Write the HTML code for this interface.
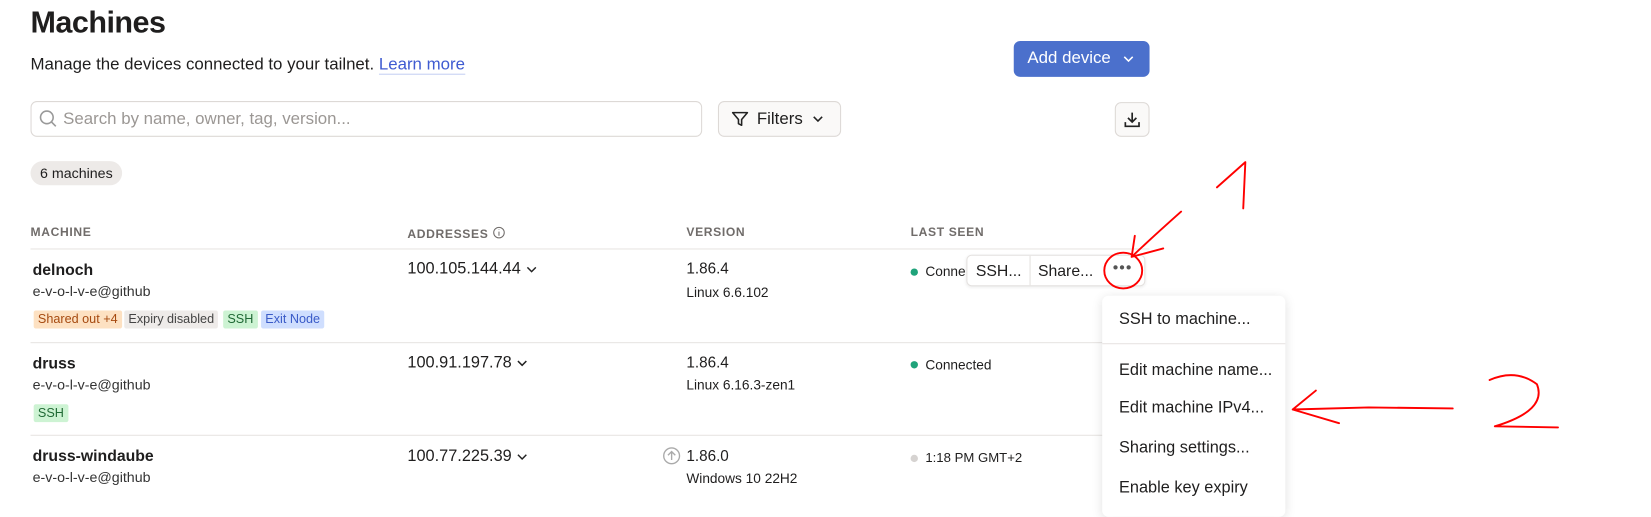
<!DOCTYPE html>
<html><head><meta charset="utf-8">
<style>
*{box-sizing:border-box;margin:0;padding:0}
body{width:1651px;height:487px;overflow:hidden;background:#fff;font-family:"Liberation Sans",sans-serif;color:#1f1e1e;position:relative}
#w{position:absolute;left:0;top:0;width:1568px;height:463px;transform:scale(1.0527);transform-origin:0 0}
.a{position:absolute;white-space:nowrap}
h1{position:absolute;left:29px;top:6px;font-size:29px;font-weight:700;letter-spacing:-0.5px}
.sub{left:29px;top:53px;font-size:16px}
.sub a{color:#3f5bd1;text-decoration:none;border-bottom:1px solid #c6cff2}
.btn{position:absolute;border:1px solid #ddd9d6;border-radius:6px;background:#faf9f8;font-size:16px}
.hd{font-size:11.5px;font-weight:700;color:#706c6a;letter-spacing:.6px;top:215px}
.line{position:absolute;left:29px;width:1063px;height:1px;background:#e7e4e2}
.nm{font-size:15px;font-weight:700}
.ow{font-size:13.5px;color:#333}
.ip{font-size:15.5px}
.ver{font-size:14.5px}
.os{font-size:13px}
.tag{position:absolute;font-size:12px;height:17px;line-height:17px;padding:0 4px;border-radius:2px}
.dot{position:absolute;width:7px;height:7px;border-radius:50%}
.menu{position:absolute;left:1047px;top:281px;width:174px;height:210px;background:#fff;border-radius:6px;box-shadow:0 2px 10px rgba(0,0,0,.12)}
.mi{position:absolute;left:16px;font-size:15.5px}
</style></head><body><div id="w">
<h1>Machines</h1>
<div class="a sub">Manage the devices connected to your tailnet. <a>Learn more</a></div>
<div class="a" style="left:963px;top:39px;width:129px;height:34px;background:#4b70cc;border-radius:6px;color:#fff;font-size:16px;line-height:34px;padding-left:13px">Add device <svg width="12" height="8" style="margin-left:6px" viewBox="0 0 12 8"><path d="M2 2l4 4 4-4" stroke="#fff" stroke-width="1.5" fill="none"/></svg></div>
<div class="a" style="left:29px;top:96px;width:638px;height:34px;border:1px solid #ddd9d6;border-radius:6px"></div>
<svg class="a" style="left:37px;top:104px" width="18" height="18" viewBox="0 0 18 18"><circle cx="7.5" cy="7.5" r="6" stroke="#999" stroke-width="1.5" fill="none"/><path d="M12 12l4 4" stroke="#999" stroke-width="1.5"/></svg>
<div class="a" style="left:60px;top:105px;font-size:16px;color:#9b9794">Search by name, owner, tag, version...</div>
<div class="btn" style="left:682px;top:96px;width:117px;height:34px"></div>
<svg class="a" style="left:694px;top:104px" width="18" height="18" viewBox="0 0 18 18"><path d="M2 3h14l-5.5 6.5V15l-3-1.5V9.5z" stroke="#222" stroke-width="1.5" fill="none" stroke-linejoin="round"/></svg>
<div class="a" style="left:719px;top:105px;font-size:16px">Filters</div>
<svg class="a" style="left:771px;top:109px" width="12" height="8" viewBox="0 0 12 8"><path d="M2 2l4 4 4-4" stroke="#222" stroke-width="1.5" fill="none"/></svg>
<div class="btn" style="left:1059px;top:97px;width:33px;height:33px"></div>
<svg class="a" style="left:1066px;top:104px" width="19" height="19" viewBox="0 0 19 19"><path d="M9.5 3v9M5.5 8l4 4 4-4M3 12v4h13v-4" stroke="#222" stroke-width="1.6" fill="none"/></svg>
<div class="a" style="left:29px;top:153px;height:23px;line-height:23px;padding:0 9px;background:#edeae8;border-radius:12px;font-size:13.5px">6 machines</div>

<div class="a hd" style="left:29px">MACHINE</div>
<div class="a hd" style="left:387px">ADDRESSES <svg width="12" height="12" viewBox="0 0 12 12" style="vertical-align:-1px"><circle cx="6" cy="6" r="5" stroke="#706c6a" fill="none"/><path d="M6 5v4M6 3v.5" stroke="#706c6a"/></svg></div>
<div class="a hd" style="left:652px">VERSION</div>
<div class="a hd" style="left:865px">LAST SEEN</div>
<div class="line" style="top:236px"></div>
<div class="line" style="top:325px"></div>
<div class="line" style="top:413px"></div>

<div class="a nm" style="left:31px;top:248px">delnoch</div>
<div class="a ow" style="left:31px;top:269px">e-v-o-l-v-e@github</div>
<div class="tag" style="left:32px;top:295px;background:#fde1c2;color:#a64a10">Shared out +4</div>
<div class="tag" style="left:118px;top:295px;background:#eeebe9;color:#444">Expiry disabled</div>
<div class="tag" style="left:212px;top:295px;background:#cdf3d3;color:#206a35">SSH</div>
<div class="tag" style="left:248px;top:295px;background:#cfdefe;color:#3a5bc8">Exit Node</div>
<div class="a ip" style="left:387px;top:247px">100.105.144.44 <svg width="12" height="8" viewBox="0 0 12 8"><path d="M2 2l4 4 4-4" stroke="#222" stroke-width="1.4" fill="none"/></svg></div>
<div class="a ver" style="left:652px;top:248px">1.86.4</div>
<div class="a os" style="left:652px;top:270px">Linux 6.6.102</div>
<div class="dot" style="left:865px;top:255px;background:#1fa37a"></div>
<div class="a os" style="left:879px;top:250px">Conne</div>
<div class="a" style="left:918px;top:242px;width:170px;height:30px;background:#fff;border:1px solid #e4e1df;border-radius:5px;box-shadow:0 1px 3px rgba(0,0,0,.08)"></div>
<div class="a" style="left:978px;top:243px;width:1px;height:28px;background:#e4e1df"></div>
<div class="a" style="left:927px;top:249px;font-size:15px">SSH...</div>
<div class="a" style="left:986px;top:249px;font-size:15px">Share...</div>
<div class="a" style="left:1057px;top:246px;font-size:15px;color:#555;letter-spacing:1px">•••</div>

<div class="a nm" style="left:31px;top:337px">druss</div>
<div class="a ow" style="left:31px;top:358px">e-v-o-l-v-e@github</div>
<div class="tag" style="left:32px;top:384px;background:#cdf3d3;color:#206a35">SSH</div>
<div class="a ip" style="left:387px;top:336px">100.91.197.78 <svg width="12" height="8" viewBox="0 0 12 8"><path d="M2 2l4 4 4-4" stroke="#222" stroke-width="1.4" fill="none"/></svg></div>
<div class="a ver" style="left:652px;top:337px">1.86.4</div>
<div class="a os" style="left:652px;top:358px">Linux 6.16.3-zen1</div>
<div class="dot" style="left:865px;top:343px;background:#1fa37a"></div>
<div class="a os" style="left:879px;top:339px">Connected</div>

<div class="a nm" style="left:31px;top:425px">druss-windaube</div>
<div class="a ow" style="left:31px;top:446px">e-v-o-l-v-e@github</div>
<div class="a ip" style="left:387px;top:425px">100.77.225.39 <svg width="12" height="8" viewBox="0 0 12 8"><path d="M2 2l4 4 4-4" stroke="#222" stroke-width="1.4" fill="none"/></svg></div>
<svg class="a" style="left:629px;top:424px" width="18" height="18" viewBox="0 0 18 18"><circle cx="9" cy="9" r="7.5" stroke="#aaa" stroke-width="1.3" fill="none"/><path d="M9 13V5M5.5 8.5L9 5l3.5 3.5" stroke="#aaa" stroke-width="1.3" fill="none"/></svg>
<div class="a ver" style="left:652px;top:426px">1.86.0</div>
<div class="a os" style="left:652px;top:447px">Windows 10 22H2</div>
<div class="dot" style="left:865px;top:432px;background:#d6d3d1"></div>
<div class="a" style="left:879px;top:428px;font-size:12.5px">1:18 PM GMT+2</div>

<div class="menu">
<div class="mi" style="top:14px">SSH to machine...</div>
<div style="position:absolute;left:0;right:0;top:45px;height:1px;background:#e7e4e2"></div>
<div class="mi" style="top:62px">Edit machine name...</div>
<div class="mi" style="top:98px">Edit machine IPv4...</div>
<div class="mi" style="top:136px">Sharing settings...</div>
<div class="mi" style="top:174px">Enable key expiry</div>
</div>

<svg class="a" style="left:0;top:0" width="1568" height="463" viewBox="0 0 1568 463" fill="none" stroke="#f00" stroke-width="1.8" stroke-linecap="round" stroke-linejoin="round">
<path d="M1156 178L1183 154L1181 198"/>
<path d="M1122 201Q1095 225 1075 244M1075 244L1078 224M1075 244L1105 236"/>
<ellipse cx="1067" cy="257" rx="18" ry="17"/>
<path d="M1380 388L1300 387L1228 389M1228 389L1250 371M1228 389L1272 402"/>
<path d="M1415 361Q1440 350 1460 365Q1470 390 1420 405L1480 406"/>
</svg>
</div></body></html>
